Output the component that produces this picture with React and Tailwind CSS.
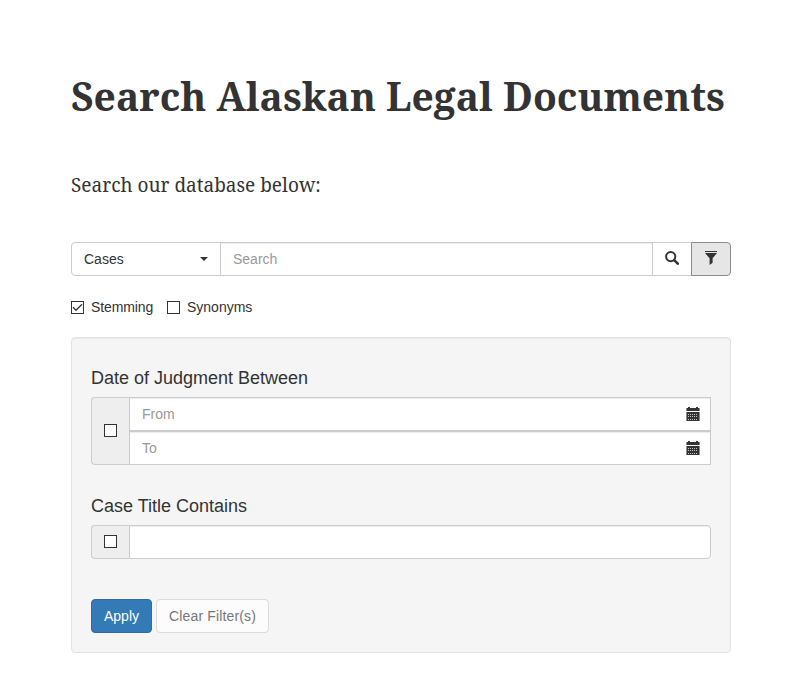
import React from "react";

const serif = "font-['Noto_Serif','Droid_Serif','DejaVu_Serif_Condensed','DejaVu_Serif',serif]";
const field =
  "block min-w-0 h-[34px] border border-[#ccc] bg-white px-3 text-sm leading-5 text-[#555] placeholder:text-[#999] placeholder:opacity-100 shadow-[inset_0_1px_1px_rgba(0,0,0,0.075)] outline-none";

function Box({ checked = false }) {
  return (
    <svg width="13" height="13" viewBox="0 0 13 13" className="block shrink-0">
      <rect x="0.5" y="0.5" width="12" height="12" fill="#fff" stroke="#333" />
      {checked && <path d="M2 6.3 5 9.3 11 3.3" fill="none" stroke="#333" strokeWidth="1.3" />}
    </svg>
  );
}

function CalendarIcon() {
  return (
    <svg width="14" height="14" viewBox="0 0 14 14" shapeRendering="crispEdges" className="block shrink-0">
      <path fill="#333" d="M2 0h2v1h6V0h2v1h1v3H1V1h1zM1 5h12v9H1z" />
      <path fill="#333" fillOpacity="0.55" d="M0 1h1v3H0zM13 1h1v3h-1zM0 5h1v9H0zM13 5h1v9h-1z" />
      <path
        stroke="#c4c4c4"
        strokeWidth="1"
        strokeDasharray="1 1"
        d="M2 7.5h10M2 9.5h10M2 12.5h10"
      />
    </svg>
  );
}

function DateField({ label }) {
  return (
    <div className="relative">
      <input placeholder={label} className={`${field} w-full`} />
      <span className="absolute right-[11px] top-[10px]">
        <CalendarIcon />
      </span>
    </div>
  );
}

export default function App() {
  return (
    <main className="h-[682px] w-[798px] overflow-hidden bg-white pl-[71px] pr-[67px] pt-[72px] font-['Liberation_Sans',Arial,sans-serif] text-sm leading-5 text-[#333]">
      <h1 className={`${serif} h-[50px] whitespace-nowrap text-[39px] font-bold leading-[48px]`}>
        Search Alaskan Legal Documents
      </h1>
      <p className={`${serif} mt-[50px] h-[26px] whitespace-nowrap text-[19px] leading-[26px]`}>
        Search our database below:
      </p>

      <div className="mt-[44px] flex h-[34px]">
        <button className="flex w-[150px] items-center justify-between rounded-l border border-[#ccc] bg-white pl-3 pr-3">
          <span>Cases</span>
          <span className="border-x-4 border-t-4 border-x-transparent border-t-[#333]" />
        </button>
        <input placeholder="Search" className={`${field} -ml-px w-[433px]`} />
        <button className="-ml-px flex w-[40px] items-center justify-center border border-[#ccc] bg-white pb-0.5">
          <svg width="14" height="14" viewBox="0 0 14 14" fill="none" stroke="#333">
            <circle cx="5.7" cy="5.6" r="4.6" strokeWidth="2" />
            <path d="m9.2 9.1 3.6 3.6" strokeWidth="2.5" strokeLinecap="round" />
          </svg>
        </button>
        <button className="-ml-px flex w-[40px] justify-center rounded-r border border-[#8c8c8c] bg-[#e6e6e6] pt-[8px]">
          <svg width="14" height="14" viewBox="0 0 14 14" fill="#333">
            <path d="M1 0h12v1H1zM1 2h12L8.6 7.2v4.5L5.6 14V7.2z" />
          </svg>
        </button>
      </div>

      <div className="mt-[21px] flex h-5 items-center">
        <Box checked />
        <span className="ml-[7px] w-[76px] tracking-[-0.1px]">Stemming</span>
        <Box />
        <span className="ml-[7px]">Synonyms</span>
      </div>

      <section className="mt-5 h-[316px] rounded border border-[#e3e3e3] bg-[#f5f5f5] px-[19px] pt-[30px] shadow-[inset_0_1px_1px_rgba(0,0,0,0.05)]">
        <h4 className="text-[18px] leading-5">Date of Judgment Between</h4>
        <div className="mt-[9px] flex h-[68px]">
          <div className="flex w-[38px] items-center justify-center rounded-l border border-r-0 border-[#ccc] bg-[#eee] pb-px">
            <Box />
          </div>
          <div className="flex-1">
            <DateField label="From" />
            <DateField label="To" />
          </div>
        </div>

        <h4 className="mt-[31px] text-[18px] leading-5">Case Title Contains</h4>
        <div className="mt-[9px] flex h-[34px]">
          <div className="flex w-[38px] items-center justify-center rounded-l border border-r-0 border-[#ccc] bg-[#eee] pb-px">
            <Box />
          </div>
          <input aria-label="Case Title Contains" className={`${field} flex-1 rounded-r`} />
        </div>

        <div className="mt-10 flex gap-1">
          <button className="h-[34px] w-[61px] rounded border border-[#2e6da4] bg-[#337ab7] text-white">Apply</button>
          <button className="h-[34px] w-[113px] whitespace-nowrap rounded border border-[#dbdbdb] bg-[#fcfcfc] tracking-[0.15px] text-[#777]">
            Clear Filter(s)
          </button>
        </div>
      </section>
    </main>
  );
}
